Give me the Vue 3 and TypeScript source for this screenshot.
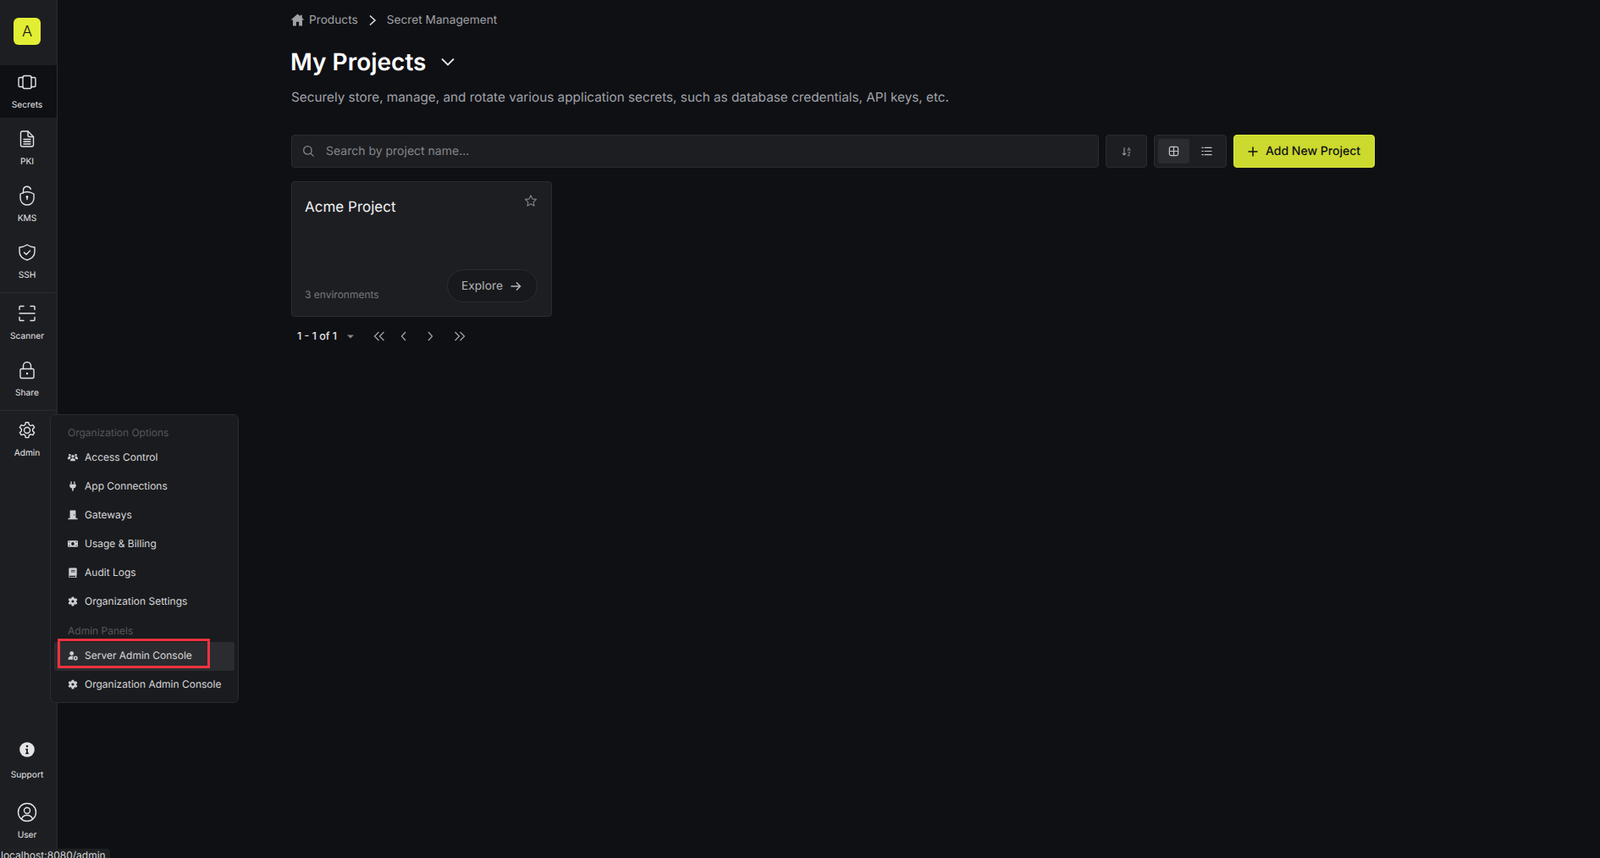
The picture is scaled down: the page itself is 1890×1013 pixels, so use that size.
<script setup lang="ts">
interface NavItem {
  label: string
  icon: string
  active?: boolean
}

const productNav: NavItem[] = [
  { label: 'Secrets', icon: 'secrets', active: true },
  { label: 'PKI', icon: 'pki' },
  { label: 'KMS', icon: 'kms' },
  { label: 'SSH', icon: 'ssh' }
]
const toolNav: NavItem[] = [
  { label: 'Scanner', icon: 'scanner' },
  { label: 'Share', icon: 'share' }
]
const orgOptions = [
  { label: 'Access Control', icon: 'users' },
  { label: 'App Connections', icon: 'plug' },
  { label: 'Gateways', icon: 'door' },
  { label: 'Usage & Billing', icon: 'money' },
  { label: 'Audit Logs', icon: 'book' },
  { label: 'Organization Settings', icon: 'cog' }
]
</script>

<template>
  <div class="app">
    <aside class="sidebar">
      <div class="logo-wrap"><div class="logo">A</div></div>
      <nav class="nav-group">
        <a v-for="item in productNav" :key="item.label" class="nav-item" :class="{ active: item.active }">
          <svg viewBox="0 0 24 24" class="nav-icon">
            <template v-if="item.icon === 'secrets'">
              <rect x="7" y="4.500" width="10" height="15" rx="2" />
              <path d="M7 6.500H3.500A1.500 1.500 0 0 0 2 8v8a1.500 1.500 0 0 0 1.500 1.500H7M17 6.500h3.500A1.500 1.500 0 0 1 22 8v8a1.500 1.500 0 0 1-1.500 1.500H17" />
            </template>
            <template v-else-if="item.icon === 'pki'">
              <path d="M6.500 3h6.500l6.500 6.500V19a2 2 0 0 1-2 2h-11a2 2 0 0 1-2-2V5a2 2 0 0 1 2-2Z" />
              <path d="M13 3v4.500a2 2 0 0 0 2 2h4.500M8 12.500h8M8 15.200h8M8 18h8" />
            </template>
            <template v-else-if="item.icon === 'kms'">
              <path d="M7.500 9V5.700a4.500 4.500 0 0 1 8.800-1.300" />
              <path d="M12 7.500c3 0 5.500 1 8 2.500v5a8 8 0 0 1-16 0v-5c2.500-1.500 5-2.500 8-2.500Z" />
              <circle cx="12" cy="13.500" r="1.400" class="solid" />
              <path d="M12 14v2.500" />
            </template>
            <template v-else-if="item.icon === 'ssh'">
              <path d="M12 3c2.700 1.800 5.800 2.700 9 3v5c0 5-3.600 8.400-9 10-5.400-1.600-9-5-9-10V6c3.200-.3 6.300-1.200 9-3Z" />
              <path d="m8.500 12 2.500 2.500 4.500-4.500" />
            </template>
          </svg>
          <span>{{ item.label }}</span>
        </a>
      </nav>
      <nav class="nav-group bordered">
        <a v-for="item in toolNav" :key="item.label" class="nav-item">
          <svg viewBox="0 0 24 24" class="nav-icon">
            <template v-if="item.icon === 'scanner'">
              <path d="M8 3.500H4a1 1 0 0 0-1 1V7.500M16 3.500h4a1 1 0 0 1 1 1V7.500M8 20.500H4a1 1 0 0 1-1-1V16.500M16 20.500h4a1 1 0 0 0 1-1V16.500M3 12h18" />
            </template>
            <template v-else>
              <path d="M7.500 10.500V7a4.500 4.500 0 0 1 9 0v3.500" />
              <rect x="4" y="10.500" width="16" height="11" rx="1.500" />
              <circle cx="12" cy="16" r="1.200" class="solid" />
            </template>
          </svg>
          <span>{{ item.label }}</span>
        </a>
      </nav>
      <nav class="nav-group bordered admin">
        <a class="nav-item">
          <svg viewBox="0 0 24 24" class="nav-icon">
            <path d="M10.300 2.800h3.400l.6 2.700 1.900 1.100 2.700-.8 1.700 2.900-2 1.900v2.200l2 1.900-1.700 2.900-2.700-.8-1.900 1.100-.6 2.700h-3.400l-.6-2.700-1.900-1.100-2.700.8-1.700-2.900 2-1.900v-2.200l-2-1.900 1.700-2.900 2.700.8 1.900-1.100Z" stroke-linejoin="round" />
            <circle cx="12" cy="12" r="3.500" />
          </svg>
          <span>Admin</span>
        </a>
      </nav>
      <div class="spacer" />
      <nav class="nav-group bottom">
        <a class="nav-item support">
          <svg viewBox="0 0 24 24" class="nav-icon">
            <circle cx="12" cy="12" r="11.800" class="solid" />
            <circle cx="12" cy="6.800" r="1.700" class="cut" />
            <path d="M9.500 10.500h3.700v6.500h1.500v2H9.500v-2h1.300v-4.500H9.500Z" class="cut" />
          </svg>
          <span>Support</span>
        </a>
        <a class="nav-item">
          <svg viewBox="0 0 24 24" class="nav-icon user-icon">
            <circle cx="12" cy="12" r="10.500" />
            <circle cx="12" cy="10" r="3.500" />
            <path d="M5.500 20c1-3 3.500-4.500 6.500-4.500s5.500 1.500 6.500 4.500" />
          </svg>
          <span>User</span>
        </a>
      </nav>
    </aside>

    <main class="main">
      <div class="content">
        <div class="breadcrumb">
          <svg viewBox="0 0 16 16" class="home"><path d="M8 1.500 .5 8h2.300v6.500h3.700V10h3v4.500h3.700V8h2.300l-2.500-2.200V2.500h-2v1.600Z" /></svg>
          <span>Products</span>
          <svg viewBox="0 0 12 16" class="crumb-sep"><path d="m3 2.500 6 5.500-6 5.500" /></svg>
          <span>Secret Management</span>
        </div>

        <div class="title-row">
          <h1>My Projects</h1>
          <svg viewBox="0 0 18 12" class="title-chevron"><path d="m2 2.500 7 7 7-7" /></svg>
        </div>
        <p class="desc">Securely store, manage, and rotate various application secrets, such as database credentials, API keys, etc.</p>

        <div class="toolbar">
          <div class="search">
            <svg viewBox="0 0 16 16" class="search-icon"><circle cx="6.800" cy="6.800" r="5" /><path d="m10.500 10.500 4 4" /></svg>
            <input type="text" placeholder="Search by project name..." />
          </div>
          <button class="sort-btn">
            <svg viewBox="0 0 14 14" class="sort-icon">
              <path d="M3.500 1.500v10M1 9.200l2.500 2.500L6 9.200" />
              <path d="M8 6 10 1.500 12 6M8.700 4.600h2.600M8.300 8h3.400L8.300 12.500h3.400" class="thin" />
            </svg>
          </button>
          <div class="view-toggle">
            <button class="view-btn on">
              <svg viewBox="0 0 14 14" class="view-icon"><rect x="1.500" y="1.500" width="11" height="11" rx="2" /><path d="M7 1.500v11M1.500 7h11" /></svg>
            </button>
            <button class="view-btn">
              <svg viewBox="0 0 14 14" class="view-icon"><path d="M4.500 2.500h8.500M4.500 7h8.500M4.500 11.500h8.500M1 2.500h1.500M1 7h1.500M1 11.500h1.500" /></svg>
            </button>
          </div>
          <button class="add-btn">
            <svg viewBox="0 0 12 12" class="plus"><path d="M6 .5v11M.5 6h11" /></svg>
            Add New Project
          </button>
        </div>

        <div class="card">
          <div class="card-top">
            <h3>Acme Project</h3>
            <svg viewBox="0 0 24 24" class="star"><path d="m12 2.500 2.900 6.300 6.900.8-5.100 4.700 1.400 6.800L12 17.700l-6.100 3.400 1.400-6.800-5.100-4.700 6.900-.8Z" /></svg>
          </div>
          <div class="card-bottom">
            <span class="envs">3 environments</span>
            <button class="explore">
              Explore
              <svg viewBox="0 0 14 14" class="arrow"><path d="M1.500 7h11M8 2.500 12.500 7 8 11.500" /></svg>
            </button>
          </div>
        </div>

        <div class="pagination">
          <span class="page-count">1 - 1 of 1</span>
          <svg viewBox="0 0 8 5" class="caret"><path d="M0 .5h8L4 4.500Z" /></svg>
          <svg viewBox="0 0 14 12" class="page-icon first"><path d="M6.500 1 1.500 6l5 5M12.500 1l-5 5 5 5" /></svg>
          <svg viewBox="0 0 8 12" class="page-icon prev"><path d="M6 1 1.500 6 6 11" /></svg>
          <svg viewBox="0 0 8 12" class="page-icon next"><path d="M2 1l4.500 5L2 11" /></svg>
          <svg viewBox="0 0 14 12" class="page-icon last"><path d="M1.500 1l5 5-5 5M7.500 1l5 5-5 5" /></svg>
        </div>
      </div>
    </main>

    <div class="menu">
      <div class="menu-label">Organization Options</div>
      <a v-for="opt in orgOptions" :key="opt.label" class="menu-item">
        <svg viewBox="0 0 14 14" class="menu-icon">
          <template v-if="opt.icon === 'users'">
            <circle cx="7" cy="5.500" r="2" /><circle cx="2.800" cy="3.800" r="1.500" /><circle cx="11.200" cy="3.800" r="1.500" />
            <path d="M3.500 12c0-2.800 1.400-3.800 3.500-3.800s3.500 1 3.500 3.800ZM0 8.800c0-2 1-3.300 2.800-3.300.5 0 .9.100 1.200.4-.4.900-.3 1.700 0 2.400-.6.300-1 .8-1.300 1.300H0ZM14 8.800c0-2-1-3.300-2.800-3.300-.5 0-.9.100-1.200.4.400.9.300 1.700 0 2.400.6.300 1 .8 1.300 1.300H14Z" />
          </template>
          <template v-else-if="opt.icon === 'plug'">
            <path d="M4 .5h1.600v3.500H4ZM8.400 .5H10v3.500H8.400ZM2.600 4.500h8.800V6c0 2.100-1.300 3.500-3.400 3.800V13.500H6V9.800C3.900 9.500 2.600 8.100 2.600 6Z" />
          </template>
          <template v-else-if="opt.icon === 'door'">
            <path fill-rule="evenodd" d="M3 1.500a1 1 0 0 1 1-1h6a1 1 0 0 1 1 1V11.500h2.500V13H.5v-1.500H3ZM8.800 6a.8.8 0 1 0 0 1.600.8.8 0 0 0 0-1.600Z" />
          </template>
          <template v-else-if="opt.icon === 'money'">
            <path fill-rule="evenodd" d="M1.200 2.500h11.600A1.200 1.200 0 0 1 14 3.700v6.600a1.200 1.200 0 0 1-1.200 1.200H1.200A1.200 1.200 0 0 1 0 10.300V3.700A1.200 1.200 0 0 1 1.200 2.500ZM7 4.800a2.200 2.200 0 1 0 0 4.400 2.200 2.200 0 0 0 0-4.400ZM1.500 4v1.500A1.500 1.500 0 0 0 3 4ZM1.500 10V8.500A1.500 1.500 0 0 1 3 10ZM12.500 4v1.500A1.500 1.500 0 0 1 11 4ZM12.500 10V8.500A1.500 1.500 0 0 0 11 10Z" />
          </template>
          <template v-else-if="opt.icon === 'book'">
            <path fill-rule="evenodd" d="M3 .5h8.500a1 1 0 0 1 1 1v9a1 1 0 0 1-.7 1v1.500h.7v1H3a1.500 1.500 0 0 1-1.500-1.500V2A1.500 1.500 0 0 1 3 .5ZM3 11.500a.75.75 0 0 0 0 1.500h7.500v-1.500ZM4.500 3.500v1h5.500v-1ZM4.500 5.500v1h5.500v-1Z" />
          </template>
          <template v-else>
            <path fill-rule="evenodd" d="M5.500.3h3l.4 1.900 1 .6 1.900-.6 1.500 2.500-1.500 1.300v1.200l1.500 1.300-1.500 2.500-1.900-.6-1 .6-.4 1.900h-3l-.4-1.900-1-.6-1.900.6L.7 8.400l1.500-1.300V5.900L.7 4.600l1.500-2.500 1.900.6 1-.6ZM7 4.700a1.800 1.800 0 1 0 0 3.600 1.800 1.800 0 0 0 0-3.600Z" transform="translate(0 .5)" />
          </template>
        </svg>
        {{ opt.label }}
      </a>
      <div class="menu-label">Admin Panels</div>
      <a class="menu-item hovered">
        <svg viewBox="0 0 14 14" class="menu-icon">
          <circle cx="5.500" cy="4" r="2.800" />
          <path d="M.5 12.500c0-3 2-5 5-5 .9 0 1.500.1 2.200.5a3.500 3.500 0 0 0-.2 4.500Z" />
          <path fill-rule="evenodd" d="M10.800 7.500a3 3 0 1 1 0 6 3 3 0 0 1 0-6Zm0 1.800a1.200 1.200 0 1 0 0 2.400 1.200 1.200 0 0 0 0-2.400Z" />
        </svg>
        Server Admin Console
        <span class="highlight" />
      </a>
      <a class="menu-item">
        <svg viewBox="0 0 14 14" class="menu-icon">
          <path fill-rule="evenodd" d="M5.500.3h3l.4 1.900 1 .6 1.900-.6 1.500 2.500-1.500 1.300v1.200l1.500 1.300-1.500 2.500-1.900-.6-1 .6-.4 1.900h-3l-.4-1.900-1-.6-1.900.6L.7 8.400l1.500-1.300V5.900L.7 4.600l1.500-2.500 1.900.6 1-.6ZM7 4.700a1.800 1.800 0 1 0 0 3.600 1.800 1.800 0 0 0 0-3.600Z" transform="translate(0 .5)" />
        </svg>
        Organization Admin Console
      </a>
    </div>

    <div class="status-tip">localhost:8080/admin</div>
  </div>
</template>

<style>
html, body { margin: 0; background: #0f1014; }
</style>

<style scoped>
* { box-sizing: border-box; }

.app {
  display: flex;
  height: 1013px;
  overflow: hidden;
  position: relative;
  background: #0f1014;
  font-family: Inter, "Liberation Sans", sans-serif;
  text-rendering: geometricPrecision;
  color: #e4e4e6;
}

.sidebar {
  width: 68px;
  flex: none;
  display: flex;
  flex-direction: column;
  border-right: 1px solid #2b2c30;
  background: #1d1e22;
}
.logo-wrap { height: 77px; padding: 21px 0 0 16px; }
.logo {
  width: 32px;
  height: 32px;
  border-radius: 6px;
  background: #e2ee34;
  color: #111;
  font-size: 18px;
  font-weight: 300;
  display: flex;
  align-items: center;
  justify-content: center;
}
.nav-group { display: flex; flex-direction: column; gap: 5px; }
.nav-group.bordered { border-top: 1px solid #2b2c30; padding-top: 4px; margin-top: 5px; }
.nav-group.admin { padding-top: 3px; margin-top: 5px; }
.nav-group.bottom { gap: 9px; padding-bottom: 12px; }
.spacer { flex: 1; }
.nav-item {
  height: 62px;
  padding: 8px 3px 0 0;
  display: flex;
  flex-direction: column;
  align-items: center;
  font-size: 10.2px;
  line-height: 14px;
  color: #e4e4e6;
}
.nav-item span { margin-top: 8px; }
.nav-item.active { background: #0f1014; }
.nav-icon {
  width: 24px;
  height: 24px;
  fill: none;
  stroke: #e4e4e6;
  stroke-width: 1.400;
  stroke-linecap: round;
  stroke-linejoin: round;
}
.nav-icon .solid { fill: #e4e4e6; stroke: none; }
.nav-icon .cut { fill: #1d1e22; stroke: none; }
.support .nav-icon { width: 18px; height: 18px; }
.support span { margin-top: 14px; }

.main { flex: 1; min-width: 0; padding-left: 276px; }
.content { width: 1280px; }

.breadcrumb {
  height: 17px;
  margin-top: 15px;
  display: flex;
  align-items: center;
  font-size: 13.7px;
  color: #a0a1a5;
}
.home { width: 17px; height: 17px; fill: #a0a1a5; margin: 0 5px 0 -1px; }
.crumb-sep { width: 12px; height: 16px; fill: none; stroke: #e4e4e6; stroke-width: 1.500; margin: 0 11px; }

.title-row { display: flex; align-items: center; margin: 22px 0 0 -1px; height: 38px; }
h1 { margin: 0; font-size: 28px; line-height: 38px; font-weight: 600; color: #fff; }
.title-chevron { width: 18px; height: 12px; fill: none; stroke: #e4e4e6; stroke-width: 1.800; margin-left: 17px; }
.desc { margin: 11px 0 0; font-size: 15.3px; line-height: 24px; color: #a0a3aa; }

.toolbar { display: flex; gap: 8px; margin-top: 32px; height: 39px; }
.search {
  flex: 1;
  display: flex;
  align-items: center;
  padding-left: 12px;
  background: #1d1e22;
  border: 1px solid #2b2c30;
  border-radius: 4px;
}
.search-icon { width: 15px; height: 15px; fill: none; stroke: #85868a; stroke-width: 1.400; }
.search input {
  flex: 1;
  margin-left: 11px;
  background: none;
  border: 0;
  outline: 0;
  font: 14px Inter, "Liberation Sans", sans-serif;
  text-rendering: geometricPrecision;
  color: #e4e4e6;
}
.search input::placeholder { color: #85868a; opacity: 1; }
.sort-btn {
  width: 49px;
  display: flex;
  align-items: center;
  justify-content: center;
  background: #1d1e22;
  border: 1px solid #2b2c30;
  border-radius: 4px;
  padding: 0;
}
.sort-icon { width: 12px; height: 12px; fill: none; stroke: #9a9b9f; stroke-width: 1.300; }
.sort-icon .thin { stroke-width: .9; }
.view-toggle {
  width: 86px;
  display: flex;
  padding: 4px;
  gap: 2px;
  background: #1d1e22;
  border: 1px solid #2b2c30;
  border-radius: 4px;
}
.view-btn {
  flex: 1;
  display: flex;
  align-items: center;
  justify-content: center;
  background: none;
  border: 0;
  border-radius: 3px;
  padding: 0;
}
.view-btn.on { background: #2b2c30; }
.view-icon { width: 13px; height: 13px; fill: none; stroke: #c4c5c8; stroke-width: 1.300; stroke-linecap: round; }
.add-btn {
  width: 167px;
  display: flex;
  align-items: center;
  justify-content: center;
  gap: 9px;
  background: #ccd92e;
  border: 1px solid #dbe83a;
  border-radius: 4px;
  padding: 0;
  font: 500 14px Inter, "Liberation Sans", sans-serif;
  text-rendering: geometricPrecision;
  color: #0f1014;
}
.plus { width: 12px; height: 12px; fill: none; stroke: #0f1014; stroke-width: 1.500; }

.card {
  width: 308px;
  height: 160px;
  margin-top: 16px;
  padding: 15px 16px 16px 15px;
  display: flex;
  flex-direction: column;
  justify-content: space-between;
  background: #1d1e22;
  border: 1px solid #2b2c30;
  border-radius: 4px;
}
.card-top { display: flex; justify-content: space-between; align-items: flex-start; }
.card-top h3 { margin: 1px 0 0; font-size: 17px; line-height: 28px; font-weight: 400; color: #f2f2f3; }
.star { width: 16px; height: 16px; margin-top: -1px; fill: none; stroke: #85868a; stroke-width: 1.600; stroke-linejoin: round; }
.card-bottom { display: flex; justify-content: space-between; align-items: flex-end; }
.envs { font-size: 12px; line-height: 16px; color: #77787c; margin-bottom: 1px; }
.explore {
  width: 107px;
  height: 39px;
  display: flex;
  align-items: center;
  justify-content: center;
  gap: 8px;
  background: #18191c;
  border: 1px solid #2b2c30;
  border-radius: 20px;
  padding: 0 2px 0 0;
  font: 13.8px Inter, "Liberation Sans", sans-serif;
  text-rendering: geometricPrecision;
  color: #b4b5b8;
}
.arrow { width: 14px; height: 14px; fill: none; stroke: #b4b5b8; stroke-width: 1.500; }

.pagination { display: flex; align-items: center; margin-top: 15px; padding-left: 7px; height: 16px; }
.page-count { font-size: 12.5px; font-weight: 500; color: #e4e4e6; }
.caret { width: 8px; height: 5px; fill: #85868a; margin-left: 12px; }
.page-icon { height: 12px; fill: none; stroke: #a0a1a5; stroke-width: 1.300; }
.page-icon.first, .page-icon.last { width: 14px; }
.page-icon.prev, .page-icon.next { width: 8px; }
.page-icon.first { margin-left: 23px; }
.page-icon.prev { margin-left: 18px; }
.page-icon.next { margin-left: 23px; }
.page-icon.last { margin-left: 24px; }

.menu {
  position: absolute;
  left: 59px;
  top: 489px;
  width: 223px;
  height: 341px;
  padding: 4px;
  background: #1a1b1e;
  border: 1px solid #2b2c30;
  border-radius: 6px;
}
.menu-label {
  height: 30px;
  padding: 2px 0 0 16px;
  display: flex;
  align-items: center;
  font-size: 12px;
  color: #56575b;
}
.menu-item {
  position: relative;
  height: 34px;
  padding: 0 0 3px 16px;
  display: flex;
  align-items: center;
  font-size: 12px;
  color: #d8d8da;
  border-radius: 3px;
}
.menu-item.hovered { background: #2b2c30; }
.menu-icon { width: 12px; height: 12px; margin-right: 8px; fill: #cfcfd2; flex: none; }
.highlight {
  position: absolute;
  left: 4px;
  top: -4px;
  width: 180px;
  height: 35px;
  border: 3px solid #ee3340;
}

.status-tip {
  position: absolute;
  left: 0;
  bottom: 0;
  width: 130px;
  height: 11px;
  padding-left: 1px;
  background: #1e2022;
  border-top-right-radius: 4px;
  font-size: 12px;
  line-height: 15px;
  white-space: nowrap;
  overflow: hidden;
  color: #d8d8da;
}
</style>
